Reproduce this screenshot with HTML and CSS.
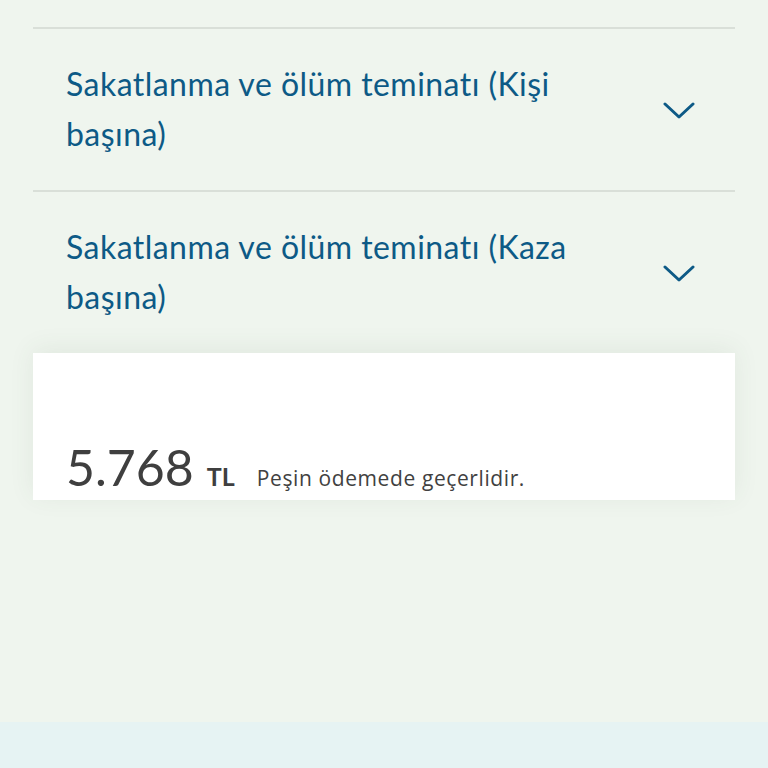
FILE: index.html
```html
<!DOCTYPE html>
<html lang="tr">
<head>
  <meta charset="UTF-8" />
  <meta name="viewport" content="width=device-width, initial-scale=1.0" />
  <title>Teminatlar</title>
  <link rel="stylesheet" href="styles.css">
</head>
<body>
  <main class="page">
    <!-- Coverage accordion -->
    <section class="coverage">
      <div class="coverage-item">
        <span class="coverage-title">Sakatlanma ve ölüm teminatı (Kişi başına)</span>
        <svg class="chevron" viewBox="0 0 32 18" width="32" height="18">
          <path d="M2 2 L16 15 L30 2" />
        </svg>
      </div>
      <div class="coverage-item">
        <span class="coverage-title">Sakatlanma ve ölüm teminatı (Kaza başına)</span>
        <svg class="chevron" viewBox="0 0 32 18" width="32" height="18">
          <path d="M2 2 L16 15 L30 2" />
        </svg>
      </div>
    </section>

    <!-- Price -->
    <section class="price-card">
      <div class="price">
        <span class="amount">5.768</span>
        <span class="currency">TL</span>
        <span class="note">Peşin ödemede geçerlidir.</span>
      </div>
    </section>
  </main>

  <footer class="footer"></footer>
</body>
</html>
```

FILE: styles.css
```css
* {
  box-sizing: border-box;
}

body {
  margin: 0;
  background: #eff5ee;
  font-family: Lato, "Open Sans", sans-serif;
}

.page {
  height: 722px;
  padding: 27px 33px 0;
}

/* Accordion */
.coverage-item {
  display: flex;
  align-items: center;
  justify-content: space-between;
  border-top: 2px solid #d9dfd8;
  padding: 30px 40px 31px 33px;
}
.coverage-title {
  max-width: 545px;
  font-size: 32px;
  line-height: 50px;
  letter-spacing: 0.45px;
  color: #0d5a86;
}
.chevron {
  flex-shrink: 0;
  margin-top: 3px;
}
.chevron path {
  fill: none;
  stroke: #0d5a86;
  stroke-width: 3;
  stroke-linecap: round;
  stroke-linejoin: round;
}

/* Price card */
.price-card {
  background: #fff;
  height: 147px;
  padding: 86px 33px 0;
  box-shadow: 0 -4px 24px rgba(60, 90, 60, 0.08);
}
.price {
  display: flex;
  align-items: baseline;
}
.amount {
  font-size: 50px;
  line-height: 56px;
  color: #3f3f3f;
}
.currency {
  margin-left: 13px;
  font-size: 25px;
  font-weight: 700;
  color: #3f3f3f;
}
.note {
  margin-left: 22px;
  font-family: "Open Sans", sans-serif;
  font-size: 21px;
  letter-spacing: 0.6px;
  color: #414141;
}

.footer {
  height: 46px;
  background: #e6f3f3;
}
```
